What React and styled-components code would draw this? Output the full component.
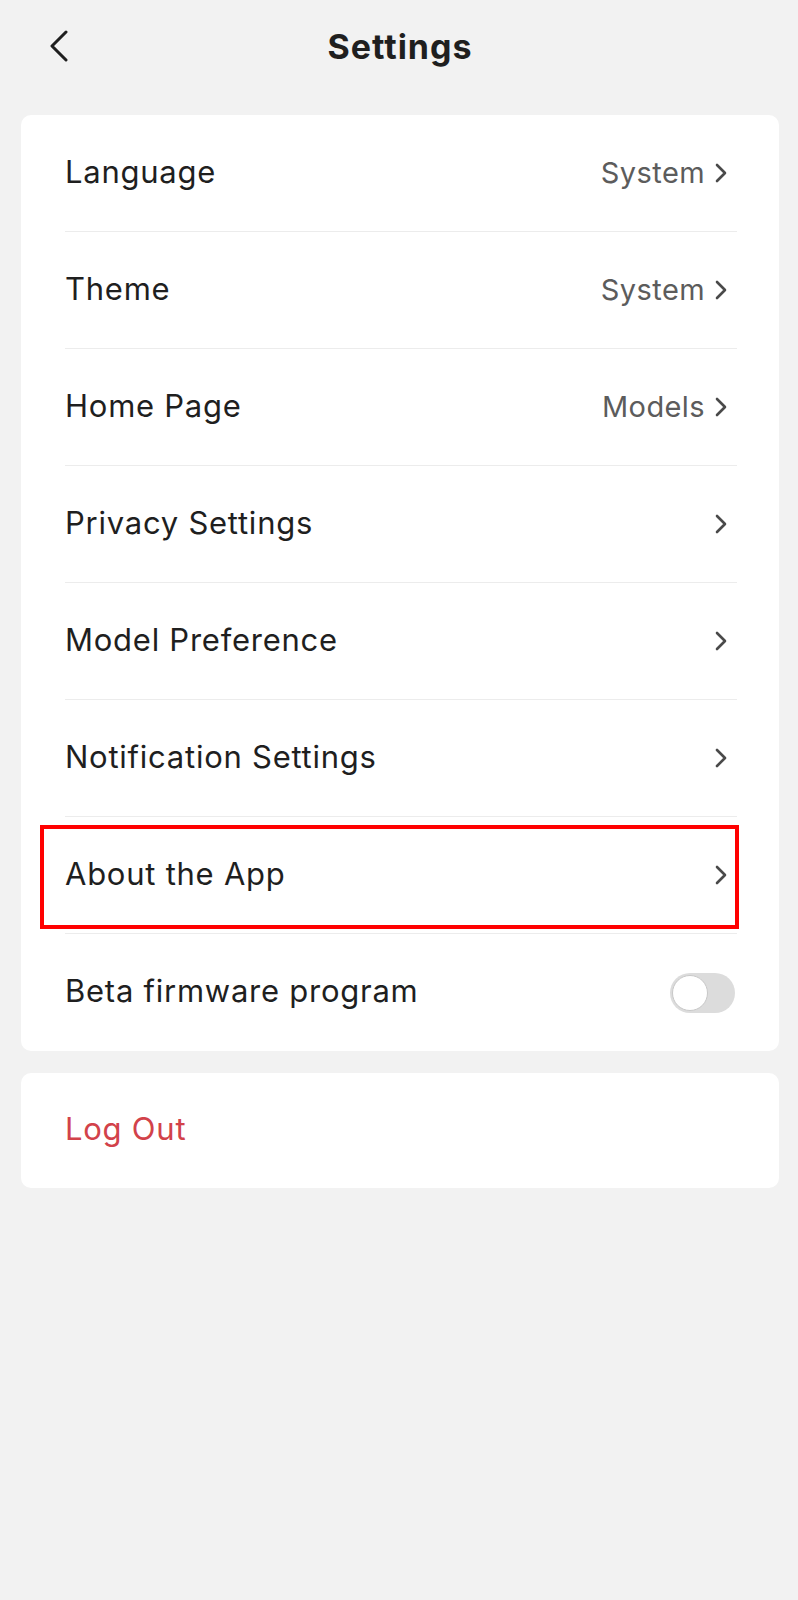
import React, { useState } from 'react'
import styled, { createGlobalStyle } from 'styled-components'

const GlobalStyle = createGlobalStyle`
  * { box-sizing: border-box; }
  body {
    margin: 0;
    background: #f2f2f2;
    font-family: Inter, "Noto Sans", sans-serif;
    color: #1f1f1f;
  }
`;

const Page = styled.div`
  min-height: 1600px;
  background: #f2f2f2;
  padding: 0 19px 0 21px;
`;

const Header = styled.header`
  height: 94px;
  display: grid;
  grid-template-columns: 60px 1fr 60px;
  align-items: center;
  padding-bottom: 2px;
`;

const BackButton = styled.button`
  border: none;
  background: none;
  padding: 0 0 0 28px;
  height: 40px;
  display: flex;
  align-items: center;
  color: #1f1f1f;
  cursor: pointer;
`;

const Title = styled.h1`
  margin: 0;
  text-align: center;
  font-size: 34px;
  font-weight: 700;
  letter-spacing: 1px;
  color: #1f1f1f;
`;

const Card = styled.section`
  background: #fff;
  border-radius: 10px;
  margin-top: ${p => p.$gap || 0}px;
`;

const Row = styled.div`
  position: relative;
  height: ${p => p.$height || 117}px;
  margin: 0 42px 0 44px;
  display: flex;
  align-items: center;
  justify-content: space-between;
  border-bottom: ${p => (p.$last ? 'none' : '1px solid #ececec')};
  cursor: pointer;
`;

const Label = styled.span`
  font-size: 31px;
  font-weight: 400;
  padding-bottom: 4px;
  color: ${p => p.$danger ? '#d2424a' : '#1f1f1f'};
  letter-spacing: 0.75px;
`;

const Right = styled.span`
  display: flex;
  align-items: center;
  gap: 10px;
  padding-right: 10px;
`;

const Value = styled.span`
  font-size: 29px;
  color: #5c5c5c;
  letter-spacing: 0.4px;
  padding-bottom: 2px;
`;

const Highlight = styled.div`
  position: absolute;
  left: -25px;
  right: -2px;
  top: 8px;
  bottom: 4px;
  border: 4px solid #ff0000;
  pointer-events: none;
`;

const Track = styled.button`
  width: 65px;
  height: 40px;
  border-radius: 20px;
  border: none;
  padding: 2px;
  background: ${p => (p.$on ? '#34c759' : '#dcdcdc')};
  display: flex;
  justify-content: ${p => (p.$on ? 'flex-end' : 'flex-start')};
  margin-right: 2px;
  cursor: pointer;
`;

const Knob = styled.span`
  width: 36px;
  height: 36px;
  border-radius: 50%;
  background: #fff;
  border: 1.5px solid #c8c8c8;
`;

function Chevron({ color = '#4a4a4a' }) {
  return (
    <svg width="12" height="20" viewBox="0 0 12 20" fill="none">
      <path d="M2 2l8 8-8 8" stroke={color} strokeWidth="2.6" strokeLinecap="round" strokeLinejoin="round" />
    </svg>
  );
}

const items = [
  { label: 'Language', value: 'System' },
  { label: 'Theme', value: 'System' },
  { label: 'Home Page', value: 'Models' },
  { label: 'Privacy Settings' },
  { label: 'Model Preference' },
  { label: 'Notification Settings' },
  { label: 'About the App', highlight: true },
];

export default function App() {
  const [beta, setBeta] = useState(false);
  return (
    <Page>
      <GlobalStyle />
      <Header>
        <BackButton aria-label="Back">
          <svg width="20" height="32" viewBox="0 0 20 32" fill="none">
            <path d="M17 2L3 16l14 14" stroke="#1f1f1f" strokeWidth="3" strokeLinecap="round" strokeLinejoin="round" />
          </svg>
        </BackButton>
        <Title>Settings</Title>
        <span />
      </Header>

      <Card $gap={21}>
        {items.map(item => (
          <Row key={item.label}>
            <Label>{item.label}</Label>
            <Right>
              {item.value && <Value>{item.value}</Value>}
              <Chevron />
            </Right>
            {item.highlight && <Highlight />}
          </Row>
        ))}
        <Row $last>
          <Label>Beta firmware program</Label>
          <Track $on={beta} onClick={() => setBeta(!beta)}>
            <Knob />
          </Track>
        </Row>
      </Card>

      <Card $gap={22}>
        <Row $last $height={115}>
          <Label $danger>Log Out</Label>
        </Row>
      </Card>
    </Page>
  );
}
